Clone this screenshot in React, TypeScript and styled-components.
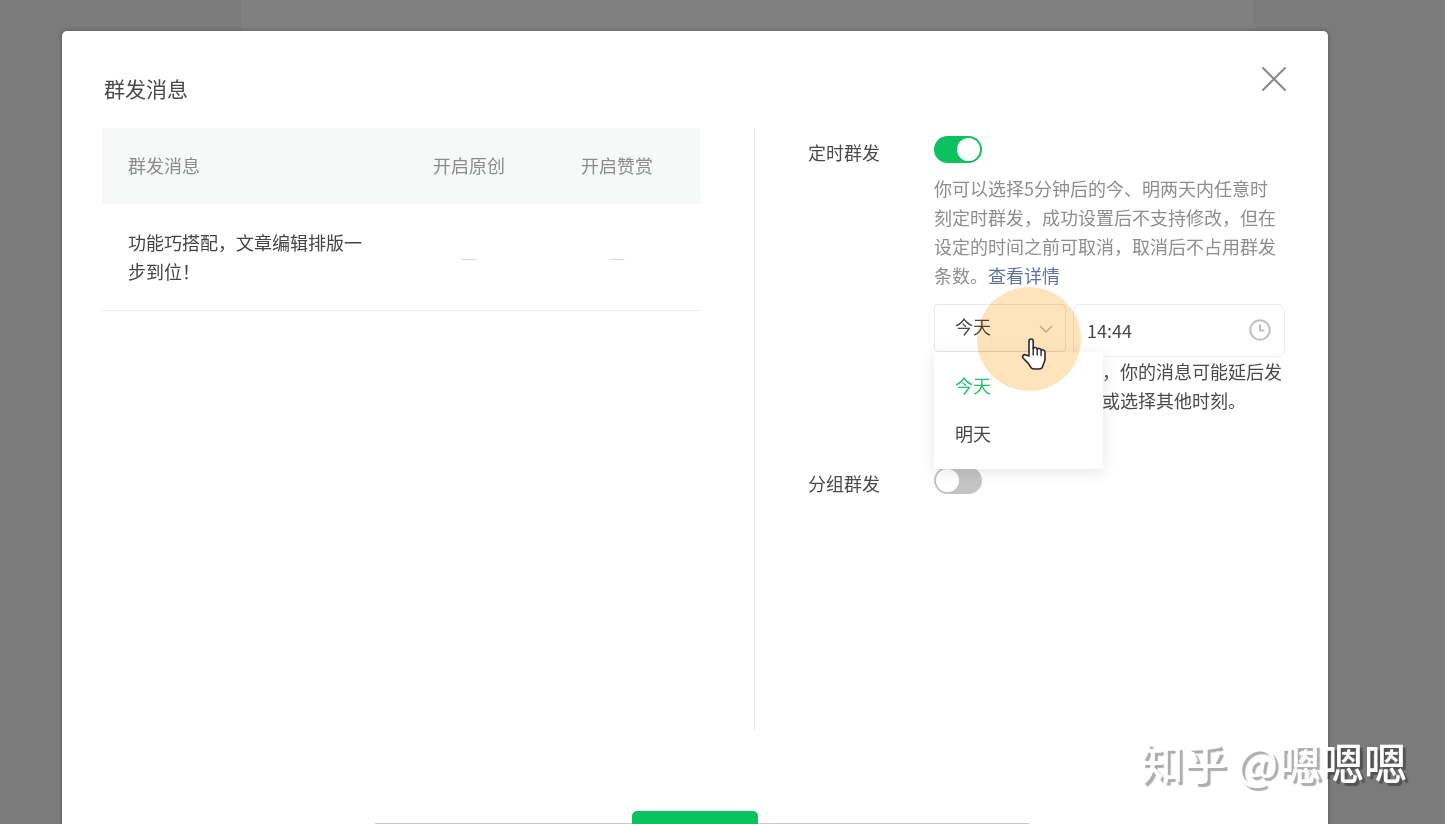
import React, { useState } from "react";
import styled, { createGlobalStyle } from "styled-components";

const GlobalStyle = createGlobalStyle`
  *, *::before, *::after { box-sizing: border-box; }
  body {
    margin: 0;
    background: #7b7b7b;
    color: #4a4a4a;
    font-family: "Noto Sans CJK SC", sans-serif;
    font-size: 18px;
    line-height: 29px;
  }
  button, input, select { font: inherit; color: inherit; }
`;

const Page = styled.div`
  min-height: 100vh;
  padding: 0 191px 0 241px;
`;

const PageColumn = styled.div`
  min-height: 100vh;
  background: #808080;
`;

const Overlay = styled.div`
  position: fixed;
  inset: 0;
  overflow: hidden;
  padding: 31px 117px 0 62px;
`;

const Dialog = styled.section`
  min-height: 100vh;
  background: #fff;
  border-radius: 5px;
  box-shadow: 0 0 5px rgba(0, 0, 0, 0.3);
`;

const DialogHeader = styled.header`
  display: flex;
  justify-content: space-between;
  align-items: flex-start;
  height: 97px;
  padding: 34px 38px 0 42px;
`;

const Title = styled.h2`
  margin: 7px 0 0;
  font-size: 21px;
  line-height: 32px;
  font-weight: 400;
`;

const CloseButton = styled.button`
  display: flex;
  padding: 0;
  border: 0;
  background: none;
  cursor: pointer;
`;

const DialogBody = styled.div`
  display: flex;
  min-height: 602px;
  padding: 0 43px 0 40px;
`;

const MessagePane = styled.div`
  flex: 1;
  padding-right: 53px;
  border-right: 1px solid #e6e6e6;
`;

const SettingsPane = styled.div`
  display: flex;
  flex-direction: column;
  gap: 52px;
  width: 530px;
  padding: 8px 0 0 53px;
`;

const Table = styled.table`
  width: 100%;
  table-layout: fixed;
  border-collapse: collapse;
`;

const HeadCell = styled.th<{ $width?: number }>`
  width: ${(p) => (p.$width ? `${p.$width}px` : "auto")};
  height: 76px;
  padding: 0 0 2px;
  background: #f7f9f9;
  color: #8c8c8c;
  font-weight: 400;
  text-align: center;

  &:first-child { padding-left: 26px; text-align: left; }
  &:last-child { padding-right: 10px; }
`;

const Cell = styled.td`
  padding: 24px 0;
  border-bottom: 1px solid #efefef;
  color: #d8d8d8;
  text-align: center;

  &:first-child { padding: 24px 24px 24px 26px; color: #444; text-align: left; }
  &:last-child { padding-right: 10px; }
`;

const SettingRow = styled.div`
  display: flex;
  align-items: flex-start;
`;

const SettingLabel = styled.label`
  flex: none;
  width: 126px;
  padding-top: 2px;
`;

const SettingContent = styled.div`
  flex: 1;
  min-width: 0;
`;

const Switch = styled.input`
  display: flex;
  align-items: center;
  appearance: none;
  width: 48px;
  height: 27px;
  margin: 0;
  padding: 2px;
  border-radius: 14px;
  background: #c4c4c4;
  cursor: pointer;

  &::before {
    content: "";
    width: 23px;
    height: 23px;
    border-radius: 50%;
    background: #fff;
  }
  &:checked { justify-content: flex-end; background: #0bc160; }
`;

const Description = styled.p`
  max-width: 350px;
  margin: 11px 0 14px;
  color: #8e8e8e;
`;

const DetailLink = styled.a`
  color: #5d72a5;
  text-decoration: none;
`;

const TimeRow = styled.div`
  display: flex;
  align-items: flex-start;
  gap: 7px;
`;

const DayPicker = styled.div`
  position: relative;
  width: 132px;
`;

const DaySelect = styled.select`
  display: block;
  appearance: none;
  width: 100%;
  height: 48px;
  padding: 0 40px 4px 20px;
  border: 1px solid #e8e8e8;
  border-radius: 4px;
  background: #fff;
  outline: 0;
`;

const Chevron = styled.svg`
  position: absolute;
  top: 19px;
  right: 13px;
  pointer-events: none;
`;

const DayMenu = styled.ul`
  position: absolute;
  top: 48px;
  left: 0;
  z-index: 2;
  width: 169px;
  margin: 0;
  padding: 9px 0 12px;
  background: #fff;
  box-shadow: 0 3px 14px rgba(0, 0, 0, 0.1);
  list-style: none;
`;

const DayOption = styled.button<{ $active: boolean }>`
  display: block;
  width: 100%;
  height: 48px;
  padding: 0 21px;
  border: 0;
  background: none;
  color: ${(p) => (p.$active ? "#20c270" : "#444")};
  text-align: left;
  cursor: pointer;
`;

const TimeField = styled.label`
  display: flex;
  flex: 1;
  align-items: center;
  min-width: 0;
  height: 53px;
  padding: 0 13px 1px;
  border: 1px solid #ececec;
  border-radius: 8px;
`;

const TimeInput = styled.input`
  flex: 1;
  min-width: 0;
  padding: 0;
  border: 0;
  outline: 0;
  background: none;
`;

const Hint = styled.p`
  margin: 0;
  padding-left: 6px;
`;

const ClickHalo = styled.div`
  position: absolute;
  top: -17px;
  left: 43px;
  z-index: 3;
  width: 104px;
  height: 104px;
  border-radius: 50%;
  background: #ffe4bb;
  mix-blend-mode: multiply;
  pointer-events: none;
`;

const HandPointer = styled.svg`
  position: absolute;
  top: 33px;
  left: 87px;
  z-index: 4;
  pointer-events: none;
`;

const DialogFooter = styled.footer`
  display: flex;
  justify-content: center;
  padding: 81px 0 40px;
`;

const SubmitButton = styled.button`
  position: relative;
  z-index: 1;
  width: 126px;
  height: 60px;
  border: 0;
  border-radius: 5px;
  background: #0bc160;
  color: #fff;
  cursor: pointer;
`;

const BottomRule = styled.div`
  position: absolute;
  right: 416px;
  bottom: 0;
  left: 375px;
  height: 1px;
  background: #c8c8c8;
`;

const Watermark = styled.div`
  position: absolute;
  right: 38px;
  bottom: 32px;
  z-index: 5;
  color: #fff;
  font-size: 43px;
  font-weight: 500;
  line-height: 62px;
  white-space: nowrap;
  text-shadow: 3px 3px 1px rgba(0, 0, 0, 0.32);
  pointer-events: none;
`;

const days = ["今天", "明天"];

export default function App() {
  const [day, setDay] = useState(days[0]);
  const [time, setTime] = useState("14:44");

  return (
    <>
      <GlobalStyle />
      <Page>
        <PageColumn />
      </Page>
      <Overlay>
        <Dialog role="dialog" aria-labelledby="dialog-title">
          <DialogHeader>
            <Title id="dialog-title">群发消息</Title>
            <CloseButton type="button" aria-label="关闭">
              <svg width="32" height="28" viewBox="0 0 32 28" fill="none" stroke="#8a8a8a" strokeWidth="2" strokeLinecap="round">
                <path d="M5 3l22 22M27 3L5 25" />
              </svg>
            </CloseButton>
          </DialogHeader>

          <DialogBody>
            <MessagePane>
              <Table>
                <thead>
                  <tr>
                    <HeadCell scope="col">群发消息</HeadCell>
                    <HeadCell scope="col" $width={148}>开启原创</HeadCell>
                    <HeadCell scope="col" $width={158}>开启赞赏</HeadCell>
                  </tr>
                </thead>
                <tbody>
                  <tr>
                    <Cell>功能巧搭配，文章编辑排版一步到位！</Cell>
                    <Cell>—</Cell>
                    <Cell>—</Cell>
                  </tr>
                </tbody>
              </Table>
            </MessagePane>

            <SettingsPane>
              <SettingRow>
                <SettingLabel htmlFor="timed">定时群发</SettingLabel>
                <SettingContent>
                  <Switch id="timed" type="checkbox" defaultChecked />
                  <Description>
                    你可以选择5分钟后的今、明两天内任意时刻定时群发，成功设置后不支持修改，但在设定的时间之前可取消，取消后不占用群发条数。
                    <DetailLink href="#detail">查看详情</DetailLink>
                  </Description>
                  <TimeRow>
                    <DayPicker>
                      <DaySelect aria-label="日期" value={day} onChange={(e) => setDay(e.target.value)}>
                        {days.map((d) => (
                          <option key={d}>{d}</option>
                        ))}
                      </DaySelect>
                      <Chevron width="14" height="12" viewBox="0 0 14 12" fill="none" stroke="#bdbdbd" strokeWidth="1.5">
                        <path d="M1 3l6 6 6-6" />
                      </Chevron>
                      <DayMenu>
                        {days.map((d) => (
                          <li key={d}>
                            <DayOption type="button" $active={d === day} onClick={() => setDay(d)}>
                              {d}
                            </DayOption>
                          </li>
                        ))}
                      </DayMenu>
                      <ClickHalo />
                      <HandPointer width="26" height="34" viewBox="0 0 26 34">
                        <path
                          d="M8 19V4.200c0-3 4.200-3 4.200 0v7.300c.8-1.500 3.700-1.300 4 .7.900-1.200 3.600-.8 3.900 1 1.200-.9 3.900-.3 3.900 2V22c0 3-1.700 4.500-2.200 7-.3 2-1.800 3-4 3h-4.500c-2 0-3.400-1-4.200-2.800-1.200-2.700-3.300-4.500-6.700-7.700-1.900-2.100.2-4.600 2.600-3.500z"
                          fill="#fff"
                          stroke="#2d2430"
                          strokeWidth="1.600"
                          strokeLinejoin="round"
                        />
                        <path d="M12.200 11v7M16.200 12.500v5.500M20.100 13.500v5" stroke="#2d2430" strokeWidth="1.400" strokeLinecap="round" />
                      </HandPointer>
                    </DayPicker>
                    <TimeField>
                      <TimeInput aria-label="时间" value={time} onChange={(e) => setTime(e.target.value)} />
                      <svg width="22" height="22" viewBox="0 0 22 22" fill="none" stroke="#c0c0c0" strokeWidth="2">
                        <circle cx="11" cy="11" r="9.700" />
                        <path d="M11 5.500V11.500H15.500" />
                      </svg>
                    </TimeField>
                  </TimeRow>
                  <Hint>该时刻群发人数较多，你的消息可能延后发送成功，建议你提前或选择其他时刻。</Hint>
                </SettingContent>
              </SettingRow>

              <SettingRow>
                <SettingLabel htmlFor="grouped">分组群发</SettingLabel>
                <SettingContent>
                  <Switch id="grouped" type="checkbox" />
                </SettingContent>
              </SettingRow>
            </SettingsPane>
          </DialogBody>

          <DialogFooter>
            <SubmitButton type="button">群发</SubmitButton>
          </DialogFooter>
        </Dialog>
        <BottomRule />
        <Watermark>知乎 @嗯嗯嗯</Watermark>
      </Overlay>
    </>
  );
}
